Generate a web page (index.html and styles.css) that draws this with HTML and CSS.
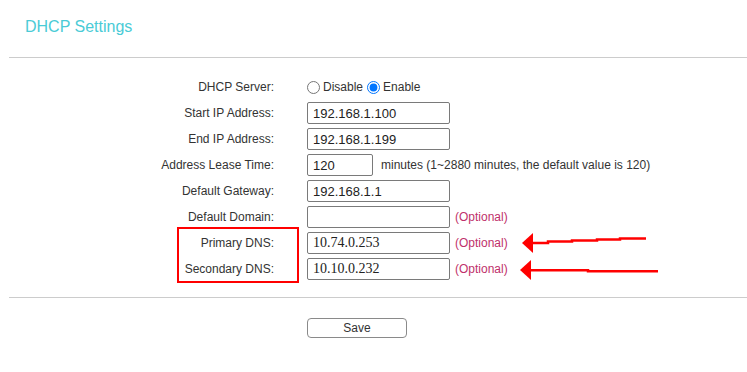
FILE: index.html
```html
<!DOCTYPE html>
<html>
<head>
<meta charset="utf-8">
<title>DHCP Settings</title>
<link rel="stylesheet" href="styles.css">
</head>
<body>
<div class="page">
  <div class="header"><h1 class="title">DHCP Settings</h1></div>
  <div class="divider"></div>
  <div class="form">
    <div class="label">DHCP Server:</div>
    <div class="field radios">
      <label class="radio"><input type="radio" name="dhcp"> Disable</label>
      <label class="radio"><input type="radio" name="dhcp" checked> Enable</label>
    </div>

    <div class="label">Start IP Address:</div>
    <div class="field"><input class="text" type="text" value="192.168.1.100"></div>

    <div class="label">End IP Address:</div>
    <div class="field"><input class="text" type="text" value="192.168.1.199"></div>

    <div class="label">Address Lease Time:</div>
    <div class="field"><input class="text short" type="text" value="120"><span class="hint">minutes (1~2880 minutes, the default value is 120)</span></div>

    <div class="label">Default Gateway:</div>
    <div class="field"><input class="text" type="text" value="192.168.1.1"></div>

    <div class="label">Default Domain:</div>
    <div class="field"><input class="text" type="text" value=""><span class="optional">(Optional)</span></div>

    <div class="label">Primary DNS:</div>
    <div class="field"><input class="text serif" type="text" value="10.74.0.253"><span class="optional">(Optional)</span></div>

    <div class="label">Secondary DNS:</div>
    <div class="field"><input class="text serif" type="text" value="10.10.0.232"><span class="optional">(Optional)</span></div>

    <div class="highlight"></div>
  </div>
  <div class="divider bottom"></div>
  <div class="actions"><button class="save" type="button">Save</button></div>

  <svg class="annotations" width="747" height="372" viewBox="0 0 747 372">
    <polygon points="522,243 533,233 533,253" fill="#ff0000"/>
    <polyline points="531,243 548,243 548,241.5 572,241.5 572,240.5 597,240.5 597,239.5 620,239.5 620,238.5 646,238.5" fill="none" stroke="#ff0000" stroke-width="2.5"/>
    <polygon points="520,270 531,260 531,280" fill="#ff0000"/>
    <polyline points="529,270.3 588,270.3 588,271.3 658,271.3" fill="none" stroke="#ff0000" stroke-width="2.5"/>
  </svg>
</div>
</body>
</html>
```

FILE: styles.css
```css
* { box-sizing: border-box; }

html, body {
  margin: 0;
  padding: 0;
  background: #ffffff;
}

body {
  font-family: "Liberation Sans", Arial, sans-serif;
  font-size: 12px;
  color: #333333;
}

.page {
  position: relative;
  width: 747px;
  height: 372px;
  overflow: hidden;
}

.header {
  height: 57px;
  padding: 18px 0 0 25px;
}

.title {
  margin: 0;
  font-size: 16px;
  line-height: 18px;
  font-weight: normal;
  color: #4acbd6;
}

.divider {
  height: 1px;
  margin-left: 9px;
  background: #cccccc;
}

.divider.bottom {
  margin-top: 15px;
}

.form {
  position: relative;
  display: grid;
  grid-template-columns: 274px 1fr;
  grid-auto-rows: 26px;
  column-gap: 33px;
  align-items: center;
  padding-top: 16px;
}

.label {
  text-align: right;
  line-height: 14px;
  color: #333;
}

.field {
  display: flex;
  align-items: center;
}

.radios {
  font-size: 12px;
}

.radio {
  display: inline-flex;
  align-items: center;
  margin-right: 4px;
}

.radio input {
  width: 13px;
  height: 13px;
  margin: 0 3px 0 0;
}

.text {
  width: 143px;
  height: 22px;
  padding: 0 5px;
  border: 1px solid #7a7a7a;
  border-radius: 2px;
  font-family: "Liberation Sans", Arial, sans-serif;
  font-size: 13px;
  color: #222;
  background: #fff;
  outline: none;
}

.text.short {
  width: 66px;
}

.text.serif {
  font-family: "Liberation Serif", "Times New Roman", serif;
  font-size: 14px;
}

.hint {
  margin-left: 8px;
  color: #333;
}

.optional {
  margin-left: 5px;
  color: #c0306b;
}

.highlight {
  position: absolute;
  left: 177px;
  top: 169px;
  width: 122px;
  height: 56px;
  border: 2px solid #ff0000;
}

.actions {
  padding: 20px 0 0 307px;
}

.save {
  width: 100px;
  height: 20px;
  padding: 0;
  border: 1px solid #8a8a8a;
  border-radius: 4px;
  background: #ffffff;
  font-family: "Liberation Sans", Arial, sans-serif;
  font-size: 12px;
  color: #333;
}

.annotations {
  position: absolute;
  left: 0;
  top: 0;
  pointer-events: none;
}
```
